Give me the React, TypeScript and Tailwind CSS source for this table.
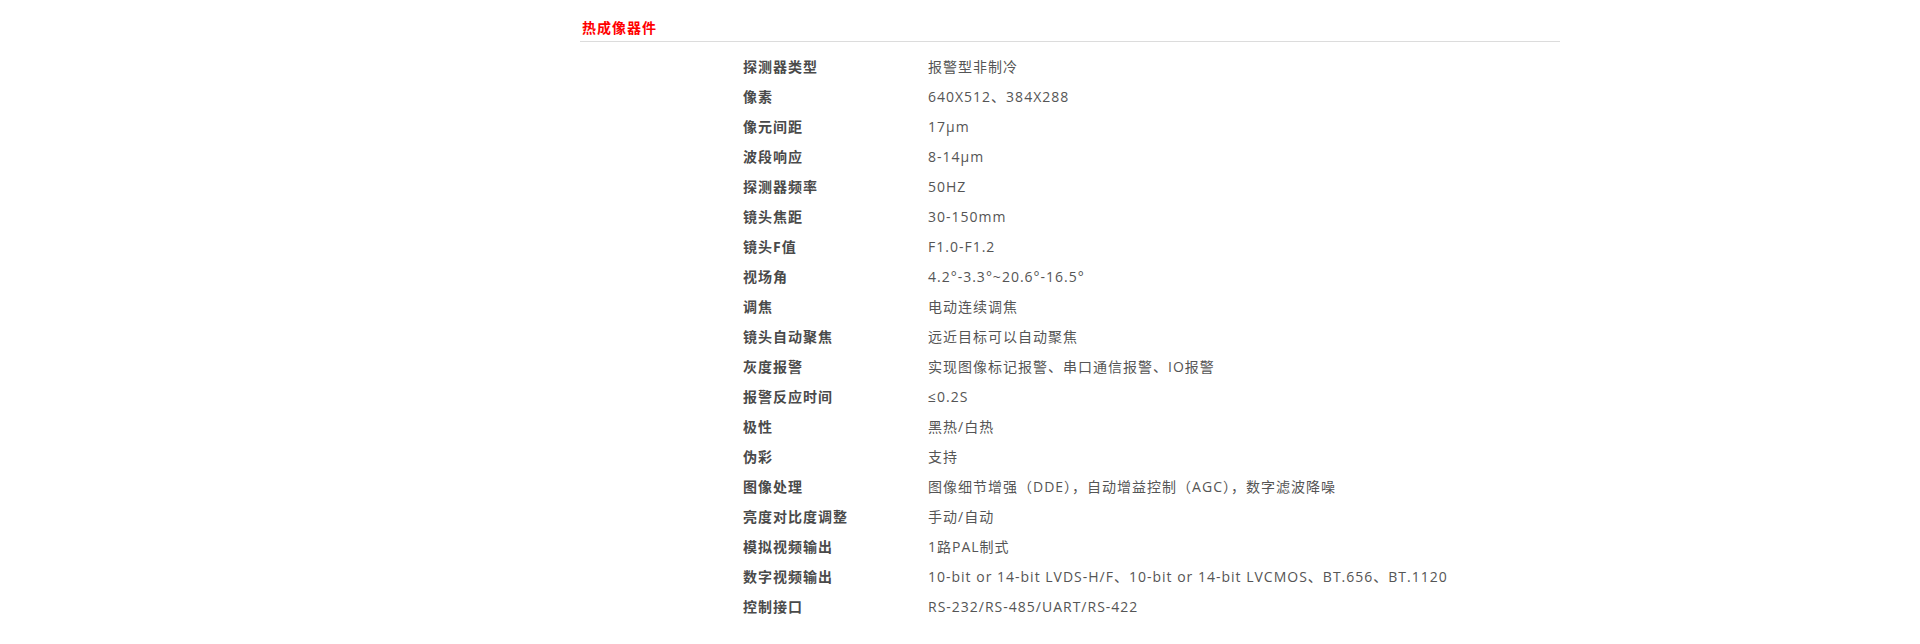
const rows: [string, string][] = [
  ['探测器类型', '报警型非制冷'],
  ['像素', '640X512、384X288'],
  ['像元间距', '17μm'],
  ['波段响应', '8-14μm'],
  ['探测器频率', '50HZ'],
  ['镜头焦距', '30-150mm'],
  ['镜头F值', 'F1.0-F1.2'],
  ['视场角', '4.2°-3.3°~20.6°-16.5°'],
  ['调焦', '电动连续调焦'],
  ['镜头自动聚焦', '远近目标可以自动聚焦'],
  ['灰度报警', '实现图像标记报警、串口通信报警、IO报警'],
  ['报警反应时间', '≤0.2S'],
  ['极性', '黑热/白热'],
  ['伪彩', '支持'],
  ['图像处理', '图像细节增强（DDE），自动增益控制（AGC），数字滤波降噪'],
  ['亮度对比度调整', '手动/自动'],
  ['模拟视频输出', '1路PAL制式'],
  ['数字视频输出', '10-bit or 14-bit LVDS-H/F、10-bit or 14-bit LVCMOS、BT.656、BT.1120'],
  ['控制接口', 'RS-232/RS-485/UART/RS-422'],
];

export default function App() {
  return (
    <div
      className="w-[1920px] h-[644px] bg-white overflow-hidden tracking-[1px]"
      style={{ fontFamily: '"Open Sans", "Noto Sans CJK SC", sans-serif' }}
    >
      <div className="ml-[580px] w-[980px] pt-[18px]">
        <div className="border-b border-[#dcdcdc] pb-[3px] pl-[2px]">
          <h2 className="text-[14px] leading-[20px] font-bold text-[#ff0000]">热成像器件</h2>
        </div>
        <div className="mt-[9px] pl-[163px]">
          {rows.map(([label, value]) => (
            <div key={label} className="flex h-[30px] items-center text-[14px] text-[#555]">
              <div className="w-[185px] font-bold text-[#4a4a4a]">{label}</div>
              <div>{value}</div>
            </div>
          ))}
        </div>
      </div>
    </div>
  );
}
